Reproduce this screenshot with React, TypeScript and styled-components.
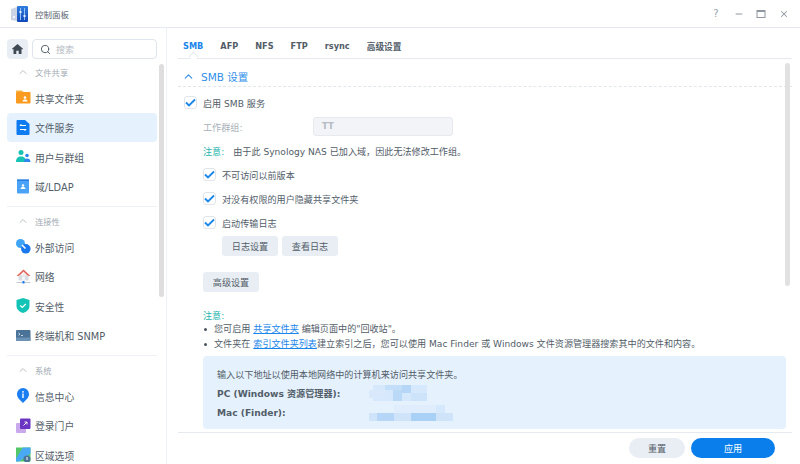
import React from "react";
import styled, { createGlobalStyle } from "styled-components";
import { ChevronUp, Search, Minus, X } from "lucide-react";

const GlobalStyle = createGlobalStyle`
  html, body {
    margin: 0;
    padding: 0;
    background: #fff;
    overflow: hidden;
  }
  * {
    box-sizing: border-box;
  }
`;

const Window = styled.div`
  width: 800px;
  height: 464px;
  display: flex;
  flex-direction: column;
  overflow: hidden;
  background: #fff;
  color: #525d68;
  font-family: "DejaVu Sans", "Noto Sans CJK SC", sans-serif;
  font-size: 9.1px;
`;

const TitleBar = styled.header`
  height: 28px;
  flex: none;
  display: flex;
  align-items: center;
  padding: 0 11.5px 0 11px;
  border-bottom: 1px solid #e6eaee;
`;

const AppTitle = styled.span`
  margin-left: 7px;
  font-size: 8.5px;
  color: #5a6570;
`;

const WindowButtons = styled.div`
  margin-left: auto;
  display: flex;
  align-items: center;
  gap: 12.5px;
  color: #8f98a1;
`;

const HelpMark = styled.span`
  width: 10px;
  text-align: center;
  font-size: 10px;
  color: #9aa3ab;
`;

const Body = styled.div`
  flex: 1;
  min-height: 0;
  display: flex;
`;

const Sidebar = styled.aside`
  width: 167px;
  flex: none;
  position: relative;
  overflow: hidden;
  border-right: 1px solid #eef1f5;
  padding: 11px 0 0 7px;
`;

const SearchRow = styled.div`
  display: flex;
  align-items: center;
  gap: 4px;
  width: 150px;
  margin-bottom: 2px;
`;

const HomeButton = styled.div`
  width: 21px;
  height: 20px;
  display: flex;
  align-items: center;
  justify-content: center;
  border-radius: 4px;
  background: #e9eef4;
`;

const SearchBox = styled.div`
  flex: 1;
  height: 20px;
  display: flex;
  align-items: center;
  gap: 5px;
  padding-left: 7px;
  border: 1px solid #dfe5eb;
  border-radius: 4px;
  color: #b4bbc3;
  font-size: 9px;
`;

const SectionHead = styled.div`
  height: 22px;
  display: flex;
  align-items: center;
  gap: 6px;
  padding-left: 10px;
  color: #a3abb3;
  font-size: 8.3px;
`;

const NavItem = styled.div<{ $active?: boolean }>`
  width: 150px;
  height: 29.5px;
  display: flex;
  align-items: center;
  gap: 4px;
  padding-left: 9px;
  border-radius: 4px;
  font-size: 9.8px;
  color: #525d68;
  background: ${(p) => (p.$active ? "#e5f1fd" : "transparent")};
`;

// text sits a pixel low next to its icon in the original
const RowText = styled.span`
  padding-top: 2px;
`;

const NavDivider = styled.div`
  width: 150px;
  height: 1px;
  margin: 5px 0 3px;
  background: #eef1f5;
`;

const SideScroll = styled.div`
  position: absolute;
  left: 159px;
  top: 36px;
  width: 5px;
  height: 233px;
  border-radius: 3px;
  background: #dedede;
`;

const Main = styled.main`
  flex: 1;
  min-width: 0;
  position: relative;
  display: flex;
  flex-direction: column;
`;

const Tabs = styled.nav`
  height: 31px;
  flex: none;
  display: flex;
  align-items: center;
  gap: 17px;
  margin: 0 8px 0 11px;
  padding: 6px 0 0 5px;
  border-bottom: 1px solid #e6eaee;
  font-size: 8.2px;
  font-weight: 700;
  color: #525d68;
`;

const Tab = styled.span<{ $active?: boolean; $cjk?: boolean }>`
  position: relative;
  color: ${(p) => (p.$active ? "#1a86ea" : "inherit")};
  font-size: ${(p) => (p.$cjk ? "8.7px" : "inherit")};
  ${(p) =>
    p.$active
      ? `&::after {
    content: "";
    position: absolute;
    left: 7px;
    bottom: -9px;
    width: 6px;
    height: 6px;
    background: #fff;
    border-left: 1px solid #e6eaee;
    border-top: 1px solid #e6eaee;
    transform: rotate(45deg);
  }`
      : ""}
`;

const Content = styled.div`
  flex: 1;
  min-height: 0;
  overflow: hidden;
  margin: 0 8px 0 11px;
`;

const SectionTitle = styled.div`
  height: 28px;
  display: flex;
  align-items: center;
  gap: 6px;
  padding: 8px 0 0 4px;
  border-bottom: 1px dashed #e3e7ec;
  color: #2f8fe9;
  font-size: 10.5px;
`;

const Form = styled.div`
  padding-top: 3px;
`;

const CheckRow = styled.div<{ $indent?: boolean }>`
  height: 24px;
  display: flex;
  align-items: center;
  gap: 6px;
  padding-left: ${(p) => (p.$indent ? "25px" : "6px")};
`;

const Box = styled.span`
  width: 13px;
  height: 13px;
  display: flex;
  align-items: center;
  justify-content: center;
  border: 1px solid #dfe5eb;
  border-radius: 3px;
`;

const FieldRow = styled.div`
  height: 24px;
  display: flex;
  align-items: center;
  padding-left: 25px;
`;

const FieldLabel = styled.span`
  width: 110px;
  padding-top: 2px;
  color: #a8afb7;
`;

const FieldInput = styled.div`
  width: 140px;
  height: 19px;
  display: flex;
  align-items: center;
  padding-left: 8px;
  border: 1px solid #e6eaee;
  border-radius: 3px;
  background: #f2f4f7;
  color: #b4bbc3;
  font-size: 8.5px;
  font-weight: 700;
`;

const NoticeRow = styled.div`
  height: 24px;
  display: flex;
  align-items: center;
  padding: 2px 0 0 25px;
`;

const NoteLabel = styled.span`
  color: #1fb5ad;
`;

const NoticeText = styled.span`
  margin-left: 9px;
`;

const ButtonRow = styled.div<{ $indent?: boolean }>`
  display: flex;
  gap: 4px;
  padding-left: ${(p) => (p.$indent ? "44px" : "25px")};
  margin-top: ${(p) => (p.$indent ? "2px" : "16px")};
`;

const SoftButton = styled.div`
  width: 56px;
  height: 20px;
  display: flex;
  align-items: center;
  justify-content: center;
  border-radius: 3px;
  background: #e9eef4;
`;

const Notes = styled.div`
  margin-top: 17px;
  padding-left: 25px;
  line-height: 14px;
`;

const NoteList = styled.ul`
  list-style: none;
  margin: -1px 0 0;
  padding: 0;
`;

const NoteItem = styled.li`
  position: relative;
  height: 14.5px;
  line-height: 14.5px;
  padding-left: 11px;
  white-space: nowrap;
  &::before {
    content: "";
    position: absolute;
    left: 1px;
    top: 6px;
    width: 3px;
    height: 3px;
    border-radius: 50%;
    background: #4a5560;
  }
`;

const DocLink = styled.a`
  color: #1a86ea;
  text-decoration: underline;
`;

const AddressPanel = styled.div`
  margin: 5px 6px 0 25px;
  height: 73px;
  padding: 8px 14px;
  border-radius: 4px;
  background: #e5f1fd;
`;

const AddressIntro = styled.div`
  height: 19.5px;
  display: flex;
  align-items: center;
`;

const AddressRow = styled(AddressIntro)`
  font-weight: 700;
`;

const AddressLabel = styled.span`
  width: 152px;
  flex: none;
`;

const MainScroll = styled.div`
  position: absolute;
  right: 10px;
  top: 35px;
  width: 5px;
  height: 223px;
  border-radius: 3px;
  background: #e1e1e1;
`;

const Footer = styled.footer`
  height: 32px;
  flex: none;
  display: flex;
  align-items: center;
  justify-content: flex-end;
  gap: 6px;
  margin: 0 8px 0 11px;
  padding: 0 17px 2px 0;
  border-top: 1px solid #e6eaee;
`;

const PillButton = styled.div<{ $primary?: boolean }>`
  width: ${(p) => (p.$primary ? "84px" : "56px")};
  height: 20px;
  display: flex;
  align-items: center;
  justify-content: center;
  border-radius: 10px;
  background: ${(p) => (p.$primary ? "#0a7fec" : "#e9eef4")};
  color: ${(p) => (p.$primary ? "#fff" : "#525d68")};
`;

const AppIcon = () => (
  <svg width="17" height="16" viewBox="0 0 17 16">
    <defs>
      <linearGradient id="appBlue" x1="0" y1="0" x2="0" y2="1">
        <stop offset="0" stopColor="#2f7de0" />
        <stop offset="1" stopColor="#1247b8" />
      </linearGradient>
    </defs>
    <path d="M0 3l6-2v14l-6-1z" fill="#ccd3e4" />
    <rect x="6" y="0" width="11" height="16" rx="1" fill="url(#appBlue)" />
    <path d="M9.500 2v12M13.500 2v12" stroke="#8fc3f5" strokeWidth="1" />
    <rect x="8.500" y="5" width="2" height="2" fill="#e6f2ff" />
    <rect x="12.500" y="9" width="2" height="2" fill="#e6f2ff" />
    <rect x="2" y="10" width="2" height="2" fill="#f4f6fb" />
  </svg>
);

const HomeIcon = () => (
  <svg width="11" height="10" viewBox="0 0 11 10">
    <path
      d="M5.500 0L11 4.800 10.300 5.500 9.500 4.900V10H6.700V6.800H4.300V10H1.500V4.900L.7 5.500 0 4.800z"
      fill="#3f4a55"
    />
  </svg>
);

const FolderIcon = () => (
  <svg width="15" height="15" viewBox="0 0 15 15">
    <path d="M0 0.500h6l1.500 1.500H0z" fill="#f5b342" />
    <rect x="0" y="2" width="14.500" height="11.500" rx="1" fill="#fa9a1e" />
    <circle cx="9" cy="7.600" r="1.300" fill="#fff" />
    <path d="M6.500 11.500c0-1.400 1-2 2.500-2s2.500.6 2.500 2z" fill="#fff" />
  </svg>
);

const FileServiceIcon = () => (
  <svg width="15" height="15" viewBox="0 0 15 15">
    <path d="M1.500 0H9l4.500 4v10a1 1 0 0 1-1 1h-11a1 1 0 0 1-1-1V1a1 1 0 0 1 1-1z" fill="#0f7bf0" />
    <path d="M4 5.500h6M4 5.500l1.500-1.500M10 9.500H4M10 9.500L8.500 11" stroke="#fff" strokeWidth="1" fill="none" />
  </svg>
);

const UsersIcon = () => (
  <svg width="15" height="15" viewBox="0 0 15 15">
    <circle cx="5" cy="3.500" r="2.500" fill="#17c2b4" />
    <path d="M0 13c0-4 2-5.500 5-5.500s5 1.500 5 5.500z" fill="#17c2b4" />
    <circle cx="11" cy="6.500" r="1.800" fill="#2f86ee" />
    <path d="M8 13c0-2.500 1-3.500 3-3.500s3.500 1 3.500 3.500z" fill="#2f86ee" />
  </svg>
);

const DomainIcon = () => (
  <svg width="15" height="15" viewBox="0 0 15 15">
    <rect x="1" y="0.500" width="12" height="14" rx="1" fill="#4aa3f7" />
    <rect x="1" y="0.500" width="12" height="1.500" fill="#2a7fe0" />
    <circle cx="7" cy="6.500" r="1.200" fill="#fff" />
    <path d="M4.500 10c0-1.400 1-1.900 2.500-1.900S9.500 8.600 9.500 10z" fill="#fff" />
  </svg>
);

const ExternalIcon = () => (
  <svg width="15" height="15" viewBox="0 0 15 15">
    <circle cx="4.500" cy="4.500" r="4.500" fill="#3fa4f6" />
    <circle cx="9.800" cy="9.800" r="4.800" fill="#1a78ee" />
    <path d="M6 6l3.500 3.500" stroke="#fff" strokeWidth="1.500" />
  </svg>
);

const NetworkIcon = () => (
  <svg width="15" height="15" viewBox="0 0 15 15">
    <path d="M7.500 0.500L0.500 7h14z" fill="#e2635a" />
    <path d="M7.500 2.500L3 7h9z" fill="#f6f0ee" />
    <rect x="2.500" y="6.500" width="10" height="5" fill="#d9dde2" />
    <rect x="6" y="7.500" width="3" height="4" fill="#f4f5f7" />
    <path d="M0.500 13.500h14" stroke="#c3c9d0" strokeWidth="1" />
    <rect x="6.500" y="12" width="2" height="2.500" fill="#1a78ee" />
  </svg>
);

const ShieldIcon = () => (
  <svg width="15" height="15" viewBox="0 0 15 15">
    <path d="M7 0l6.500 2v6c0 3.500-3 5.800-6.500 7C3.500 13.800.5 11.500.5 8V2z" fill="#13c4b6" />
    <path d="M4.300 7.500l2 2 3.500-3.500" stroke="#fff" strokeWidth="1.200" fill="none" />
  </svg>
);

const TerminalIcon = () => (
  <svg width="15" height="15" viewBox="0 0 15 15">
    <rect x="0" y="2" width="14.500" height="11" rx="1" fill="#4b7397" />
    <rect x="0" y="9.500" width="14.500" height="3.500" fill="#6c93b5" />
    <path d="M2.500 5l1.500 1.200-1.500 1.200M5 7.500h2" stroke="#e8f0f7" strokeWidth="0.800" fill="none" />
  </svg>
);

const InfoIcon = () => (
  <svg width="15" height="15" viewBox="0 0 15 15">
    <path d="M7 0a6 6 0 0 1 6 6c0 4-3.500 6.500-6 9-2.500-2.500-6-5-6-9a6 6 0 0 1 6-6z" fill="#1a7df0" />
    <rect x="6.300" y="5.500" width="1.400" height="4.500" fill="#fff" />
    <circle cx="7" cy="3.800" r="0.900" fill="#fff" />
  </svg>
);

const PortalIcon = () => (
  <svg width="15" height="15" viewBox="0 0 15 15">
    <rect x="0" y="5" width="10" height="10" rx="1" fill="#c9a9ec" />
    <rect x="4" y="0.500" width="10.500" height="10.500" rx="1" fill="#6b35c4" />
    <path d="M7.500 7.500l3.500-3.500M8.500 4h2.500v2.500" stroke="#fff" strokeWidth="0.900" fill="none" />
  </svg>
);

const RegionIcon = () => (
  <svg width="15" height="15" viewBox="0 0 15 15">
    <rect x="0" y="0.500" width="14.500" height="14" fill="#54c76a" />
    <path d="M7 0.500h7.500v6L3 14.500H0v-3z" fill="#4aa9f5" />
    <circle cx="11" cy="12" r="3.500" fill="#4a7396" />
    <rect x="10.500" y="10" width="1" height="3" fill="#fff" />
  </svg>
);

const Tick = () => (
  <svg width="11" height="9" viewBox="0 0 11 9">
    <path d="M1 4.500l3 3 6-6" stroke="#1a86ea" strokeWidth="1.800" fill="none" />
  </svg>
);

const RestoreIcon = () => (
  <svg width="10" height="10" viewBox="0 0 10 10">
    <rect x="1" y="1.500" width="8" height="7" fill="none" stroke="#8f98a1" strokeWidth="1" />
    <rect x="1" y="1" width="8" height="2" fill="#8f98a1" />
  </svg>
);

// the addresses are pixelated in the screenshot, so this is a drawn mosaic
const PcMosaic = () => (
  <svg width="58" height="16" viewBox="0 0 58 16" overflow="visible">
    <rect x="4" y="0" width="54" height="16" fill="#d6e8fb" />
    <rect x="0" y="5" width="16" height="8" fill="#d9e9fb" />
    <rect x="16" y="0" width="17" height="5" fill="#c3def8" />
    <rect x="24" y="5" width="9" height="11" fill="#b9d9f7" />
    <rect x="33" y="0" width="9" height="8" fill="#b5d6f6" />
    <rect x="42" y="8" width="16" height="8" fill="#cce3f9" />
  </svg>
);

const MacMosaic = () => (
  <svg width="84" height="16" viewBox="0 0 84 16" overflow="visible">
    <rect x="0" y="8" width="84" height="8" fill="#cfe4f9" />
    <rect x="8" y="8" width="17" height="8" fill="#b5d6f6" />
    <rect x="42" y="8" width="25" height="8" fill="#a9d0f5" />
    <rect x="25" y="0" width="42" height="8" fill="#dfedfc" />
    <rect x="67" y="0" width="9" height="8" fill="#d6e8fb" />
  </svg>
);

const Check: React.FC<{ label: string; indent?: boolean }> = ({ label, indent }) => (
  <CheckRow $indent={indent}>
    <Box>
      <Tick />
    </Box>
    <RowText>{label}</RowText>
  </CheckRow>
);

const Section: React.FC<{ label: string }> = ({ label }) => (
  <SectionHead>
    <ChevronUp size={12} strokeWidth={1.500} />
    {label}
  </SectionHead>
);

const Nav: React.FC<{ icon: React.ReactNode; label: string; active?: boolean }> = ({
  icon,
  label,
  active,
}) => (
  <NavItem $active={active}>
    {icon}
    <RowText>{label}</RowText>
  </NavItem>
);

export default function App() {
  return (
    <Window>
      <GlobalStyle />
      <TitleBar>
        <AppIcon />
        <AppTitle>控制面板</AppTitle>
        <WindowButtons>
          <HelpMark>?</HelpMark>
          <Minus size={10} strokeWidth={2.500} />
          <RestoreIcon />
          <X size={10} strokeWidth={2.500} />
        </WindowButtons>
      </TitleBar>
      <Body>
        <Sidebar>
          <SearchRow>
            <HomeButton>
              <HomeIcon />
            </HomeButton>
            <SearchBox>
              <Search size={11} color="#4a5560" strokeWidth={2} />
              搜索
            </SearchBox>
          </SearchRow>
          <Section label="文件共享" />
          <Nav icon={<FolderIcon />} label="共享文件夹" />
          <Nav icon={<FileServiceIcon />} label="文件服务" active />
          <Nav icon={<UsersIcon />} label="用户与群组" />
          <Nav icon={<DomainIcon />} label="域/LDAP" />
          <NavDivider />
          <Section label="连接性" />
          <Nav icon={<ExternalIcon />} label="外部访问" />
          <Nav icon={<NetworkIcon />} label="网络" />
          <Nav icon={<ShieldIcon />} label="安全性" />
          <Nav icon={<TerminalIcon />} label="终端机和 SNMP" />
          <NavDivider />
          <Section label="系统" />
          <Nav icon={<InfoIcon />} label="信息中心" />
          <Nav icon={<PortalIcon />} label="登录门户" />
          <Nav icon={<RegionIcon />} label="区域选项" />
          <SideScroll />
        </Sidebar>
        <Main>
          <Tabs>
            <Tab $active>SMB</Tab>
            <Tab>AFP</Tab>
            <Tab>NFS</Tab>
            <Tab>FTP</Tab>
            <Tab>rsync</Tab>
            <Tab $cjk>高级设置</Tab>
          </Tabs>
          <Content>
            <SectionTitle>
              <ChevronUp size={13} strokeWidth={2} />
              SMB 设置
            </SectionTitle>
            <Form>
              <Check label="启用 SMB 服务" />
              <FieldRow>
                <FieldLabel>工作群组:</FieldLabel>
                <FieldInput>TT</FieldInput>
              </FieldRow>
              <NoticeRow>
                <NoteLabel>注意:</NoteLabel>
                <NoticeText>由于此 Synology NAS 已加入域，因此无法修改工作组。</NoticeText>
              </NoticeRow>
              <Check label="不可访问以前版本" indent />
              <Check label="对没有权限的用户隐藏共享文件夹" indent />
              <Check label="启动传输日志" indent />
              <ButtonRow $indent>
                <SoftButton>日志设置</SoftButton>
                <SoftButton>查看日志</SoftButton>
              </ButtonRow>
              <ButtonRow>
                <SoftButton>高级设置</SoftButton>
              </ButtonRow>
            </Form>
            <Notes>
              <NoteLabel>注意:</NoteLabel>
              <NoteList>
                <NoteItem>
                  您可启用 <DocLink>共享文件夹</DocLink> 编辑页面中的"回收站"。
                </NoteItem>
                <NoteItem>
                  文件夹在 <DocLink>索引文件夹列表</DocLink>建立索引之后，您可以使用 Mac Finder 或 Windows 文件资源管理器搜索其中的文件和内容。
                </NoteItem>
              </NoteList>
            </Notes>
            <AddressPanel>
              <AddressIntro>输入以下地址以使用本地网络中的计算机来访问共享文件夹。</AddressIntro>
              <AddressRow>
                <AddressLabel>PC (Windows 资源管理器):</AddressLabel>
                <PcMosaic />
              </AddressRow>
              <AddressRow>
                <AddressLabel>Mac (Finder):</AddressLabel>
                <MacMosaic />
              </AddressRow>
            </AddressPanel>
          </Content>
          <MainScroll />
          <Footer>
            <PillButton>重置</PillButton>
            <PillButton $primary>应用</PillButton>
          </Footer>
        </Main>
      </Body>
    </Window>
  );
}
